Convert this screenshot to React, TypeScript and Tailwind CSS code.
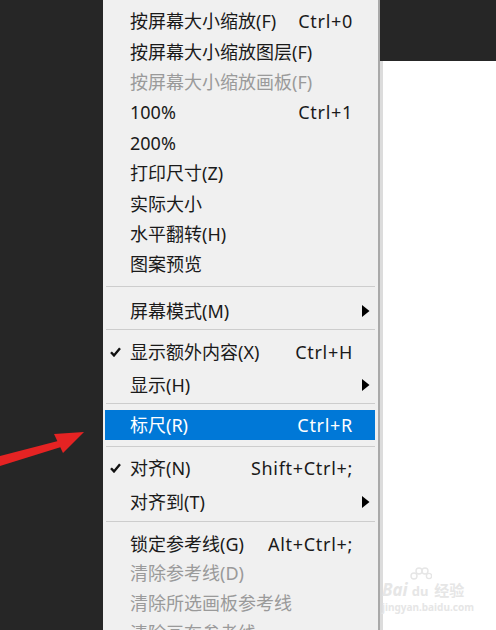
import React from 'react';

type Row = {
  kind: 'row';
  label: string;
  shortcut?: string;
  check?: boolean;
  sub?: boolean;
  disabled?: boolean;
  active?: boolean;
  h: number;
};
type Sep = { kind: 'sep'; above: number; below: number };
type Item = Row | Sep;

const items: Item[] = [
  { kind: 'row', label: '按屏幕大小缩放(F)', shortcut: 'Ctrl+0', h: 30.4 },
  { kind: 'row', label: '按屏幕大小缩放图层(F)', h: 30.4 },
  { kind: 'row', label: '按屏幕大小缩放画板(F)', disabled: true, h: 30.4 },
  { kind: 'row', label: '100%', shortcut: 'Ctrl+1', h: 30.4 },
  { kind: 'row', label: '200%', h: 30.4 },
  { kind: 'row', label: '打印尺寸(Z)', h: 30.4 },
  { kind: 'row', label: '实际大小', h: 30.4 },
  { kind: 'row', label: '水平翻转(H)', h: 30.4 },
  { kind: 'row', label: '图案预览', h: 30.4 },
  { kind: 'sep', above: 6.4, below: 9 },
  { kind: 'row', label: '屏幕模式(M)', sub: true, h: 30 },
  { kind: 'sep', above: 3, below: 6 },
  { kind: 'row', label: '显示额外内容(X)', shortcut: 'Ctrl+H', check: true, h: 32 },
  { kind: 'row', label: '显示(H)', sub: true, h: 34 },
  { kind: 'sep', above: 1, below: 6 },
  { kind: 'row', label: '标尺(R)', shortcut: 'Ctrl+R', active: true, h: 30 },
  { kind: 'sep', above: 6, below: 4 },
  { kind: 'row', label: '对齐(N)', shortcut: 'Shift+Ctrl+;', check: true, h: 34 },
  { kind: 'row', label: '对齐到(T)', sub: true, h: 34 },
  { kind: 'sep', above: 2, below: 7 },
  { kind: 'row', label: '锁定参考线(G)', shortcut: 'Alt+Ctrl+;', h: 30 },
  { kind: 'row', label: '清除参考线(D)', disabled: true, h: 29 },
  { kind: 'row', label: '清除所选画板参考线', disabled: true, h: 30 },
  { kind: 'row', label: '清除画布参考线', disabled: true, h: 30 },
];

const MenuRow: React.FC<{ row: Row }> = ({ row }) => {
  const color = row.active ? 'text-white' : row.disabled ? 'text-[#9a9a9a]' : 'text-[#1a1a1a]';
  return (
    <div
      className={`relative flex items-center shrink-0 pl-[25px] pr-[22px] ${row.active ? 'bg-[#0078d7]' : ''} ${color}`}
      style={{ height: row.h }}
    >
      {row.check && (
        <svg className="absolute left-[5px] top-1/2 -translate-y-1/2" width="11" height="10" viewBox="0 0 11 10">
          <path d="M1 5.2 L4 8.4 L10 1.2" fill="none" stroke="#111" strokeWidth="2.4" />
        </svg>
      )}
      <span className="whitespace-nowrap">{row.label}</span>
      {row.shortcut && <span className="ml-auto whitespace-nowrap tracking-[0.7px]">{row.shortcut}</span>}
      {row.sub && (
        <svg className="absolute right-[5px] top-1/2 -translate-y-1/2" width="8" height="12" viewBox="0 0 8 12">
          <polygon points="0,0 7.5,6 0,12" fill="#000" />
        </svg>
      )}
    </div>
  );
};

export default function App() {
  return (
    <div
      className="relative w-[496px] h-[630px] overflow-hidden bg-[#262626] flex text-[18px] leading-none"
      style={{ fontFamily: '"Noto Sans", "Noto Sans CJK SC", sans-serif' }}
    >
      <div className="w-[103px] shrink-0" />

      <div className="w-[277px] shrink-0 bg-[#f0f0f0] border-r-2 border-[#a9a9a9] pl-[2px] pr-[3px] pt-[6px] flex flex-col">
        {items.map((it, i) =>
          it.kind === 'sep' ? (
            <div key={i} className="shrink-0 pl-[1px]" style={{ paddingTop: it.above, paddingBottom: it.below }}>
              <div className="h-px bg-[#cdcdcd]" />
            </div>
          ) : (
            <MenuRow key={i} row={it} />
          )
        )}
      </div>

      <div className="flex-1 flex flex-col">
        <div className="h-[61px] bg-[#262626]" />
        <div className="flex-1 bg-white border-l-[3px] border-[#dcdcdc]" />
      </div>

      {/* red arrow pointing at the ruler item */}
      <svg className="absolute left-0 top-[420px]" width="90" height="50" viewBox="0 0 90 50">
        <polygon points="0,36 58,21 61,27 0,46" fill="#e52323" />
        <polygon points="84,12 54,14 63,33" fill="#e52323" />
      </svg>

      {/* faint watermark */}
      <div className="absolute left-[382px] top-[580px] flex flex-col items-start text-[#e6e6e6]">
        <div className="flex items-end">
          <span className="text-[17px] font-bold italic leading-none">Bai</span>
          <div className="relative ml-[4px]">
            <svg className="absolute -top-[13px] -left-[2px]" width="22" height="16" viewBox="0 0 22 16">
              <circle cx="4" cy="9" r="3" fill="none" stroke="#e6e6e6" strokeWidth="1.4" />
              <circle cx="9" cy="4" r="3" fill="none" stroke="#e6e6e6" strokeWidth="1.4" />
              <circle cx="15" cy="4" r="3" fill="none" stroke="#e6e6e6" strokeWidth="1.4" />
              <circle cx="19" cy="9" r="2.6" fill="none" stroke="#e6e6e6" strokeWidth="1.4" />
            </svg>
            <span className="text-[13px] font-bold leading-none">du</span>
          </div>
          <span className="ml-[6px] text-[15px] font-bold leading-none">经验</span>
        </div>
        <span className="text-[10px] font-bold mt-[4px] leading-none">jingyan.baidu.com</span>
      </div>
    </div>
  );
}
